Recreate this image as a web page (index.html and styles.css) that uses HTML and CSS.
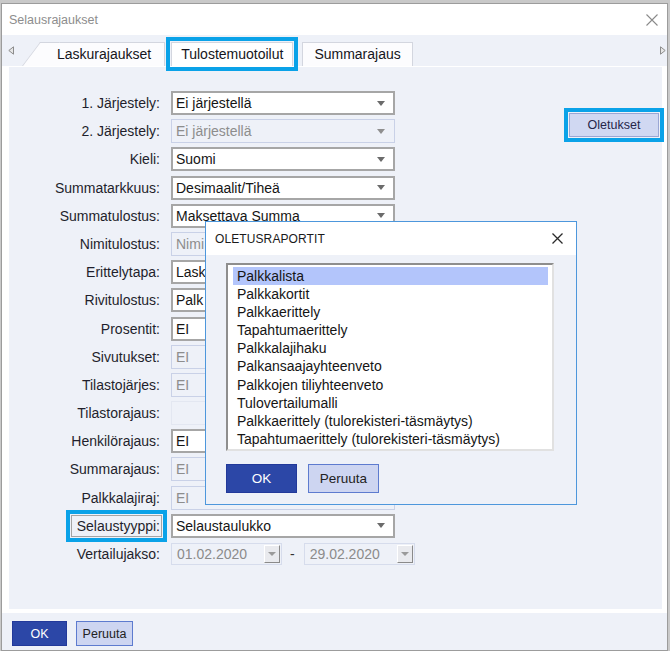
FILE: index.html
```html
<!DOCTYPE html>
<html lang="fi">

<head>
    <meta charset="UTF-8">
    <meta name="viewport" content="width=device-width, initial-scale=1.0">
    <title>Selausrajaukset</title>
    <link rel="stylesheet" href="styles.css">
</head>

<body>
    <div class="window">
        <div class="titlebar">
            <span class="title">Selausrajaukset</span>
            <svg class="close" width="12" height="12" viewBox="0 0 12 12">
                <path d="M0.5 0.5L11.5 11.5M11.5 0.5L0.5 11.5" stroke="#8a8a8a" stroke-width="1.1" fill="none" />
            </svg>
        </div>

        <div class="tabstrip">
            <svg class="tabnav" width="6" height="9" viewBox="0 0 6 9">
                <path d="M5.5 0.8V8.2L0.8 4.5z" fill="#e6e6e6" stroke="#8c8c8c" stroke-width="1" />
            </svg>
            <div class="tabs">
                <div class="tab tab-first"><span>Laskurajaukset</span></div>
                <div class="tab tab-active">Tulostemuotoilut</div>
                <div class="tab tab-last">Summarajaus</div>
            </div>
            <svg class="tabnav" width="6" height="9" viewBox="0 0 6 9">
                <path d="M0.5 0.8V8.2L5.2 4.5z" fill="#e6e6e6" stroke="#8c8c8c" stroke-width="1" />
            </svg>
        </div>

        <div class="panel">
            <div class="form">
                <button class="defaults-btn">Oletukset</button>

                <label class="lbl">1. Järjestely:</label>
                <div class="select">Ei järjestellä</div>

                <label class="lbl">2. Järjestely:</label>
                <div class="select disabled">Ei järjestellä</div>

                <label class="lbl">Kieli:</label>
                <div class="select">Suomi</div>

                <label class="lbl">Summatarkkuus:</label>
                <div class="select">Desimaalit/Tiheä</div>

                <label class="lbl">Summatulostus:</label>
                <div class="select">Maksettava Summa</div>

                <label class="lbl">Nimitulostus:</label>
                <div class="select disabled">Nimi</div>

                <label class="lbl">Erittelytapa:</label>
                <div class="select">Lask</div>

                <label class="lbl">Rivitulostus:</label>
                <div class="select">Palk</div>

                <label class="lbl">Prosentit:</label>
                <div class="select">EI</div>

                <label class="lbl">Sivutukset:</label>
                <div class="select disabled">EI</div>

                <label class="lbl">Tilastojärjes:</label>
                <div class="select disabled">EI</div>

                <label class="lbl">Tilastorajaus:</label>
                <div class="select disabled blank"></div>

                <label class="lbl">Henkilörajaus:</label>
                <div class="select">EI</div>

                <label class="lbl">Summarajaus:</label>
                <div class="select disabled">EI</div>

                <label class="lbl">Palkkalajiraj:</label>
                <div class="select disabled">EI</div>

                <label class="lbl lbl-focus">Selaustyyppi:</label>
                <div class="select">Selaustaulukko</div>

                <label class="lbl">Vertailujakso:</label>
                <div class="dates">
                    <div class="date">01.02.2020<span class="date-btn"></span></div>
                    <span class="dash">-</span>
                    <div class="date">29.02.2020<span class="date-btn"></span></div>
                </div>
            </div>

            <!-- oletusraportit popup -->
            <div class="modal">
                <div class="modal-head">
                    <span class="modal-title">OLETUSRAPORTIT</span>
                    <svg width="11" height="11" viewBox="0 0 11 11">
                        <path d="M0.5 0.5L10.5 10.5M10.5 0.5L0.5 10.5" stroke="#2a2a2a" stroke-width="1.3" fill="none" />
                    </svg>
                </div>
                <div class="modal-body">
                    <div class="listbox">
                        <div class="item selected">Palkkalista</div>
                        <div class="item">Palkkakortit</div>
                        <div class="item">Palkkaerittely</div>
                        <div class="item">Tapahtumaerittely</div>
                        <div class="item">Palkkalajihaku</div>
                        <div class="item">Palkansaajayhteenveto</div>
                        <div class="item">Palkkojen tiliyhteenveto</div>
                        <div class="item">Tulovertailumalli</div>
                        <div class="item">Palkkaerittely (tulorekisteri-täsmäytys)</div>
                        <div class="item">Tapahtumaerittely (tulorekisteri-täsmäytys)</div>
                    </div>
                    <div class="modal-buttons">
                        <button class="btn btn-ok">OK</button>
                        <button class="btn btn-cancel">Peruuta</button>
                    </div>
                </div>
            </div>
        </div>

        <div class="footer">
            <button class="btn btn-ok small">OK</button>
            <button class="btn btn-cancel small">Peruuta</button>
        </div>
    </div>
</body>

</html>
```

FILE: styles.css
```css
* {
    box-sizing: border-box;
}

body {
    margin: 0;
    background-color: #c9c9c9;
    font-family: "Liberation Sans", Arial, sans-serif;
    font-size: 14px;
    color: #1f1f2c;
}

.window {
    margin: 3px 0 0 1px;
    width: 667px;
    height: 648px;
    border: 1px solid #9c9c9c;
    background: #fff;
    display: flex;
    flex-direction: column;
}

.titlebar {
    flex: none;
    height: 31px;
    display: flex;
    align-items: center;
    justify-content: space-between;
    padding: 0 9px 0 7px;
}

.title {
    color: #8d8d8d;
    font-size: 12.5px;
}

/* tabs */
.tabstrip {
    flex: none;
    height: 31px;
    background: #eef1f8;
    display: flex;
    align-items: flex-end;
    padding: 0 1px 0 6px;
}

.tabnav {
    align-self: center;
}

.tabs {
    flex: 1;
    display: flex;
    align-items: flex-end;
    margin-left: 26px;
}

.tab {
    position: relative;
    height: 24px;
    line-height: 23px;
    background: #fcfcfe;
    border: 1px solid #d3d6df;
    border-bottom: none;
    color: #151520;
}

.tab-first {
    padding: 0 13px 0 17px;
    border-left: none;
}

.tab-first::before {
    content: "";
    position: absolute;
    left: -18px;
    top: -1px;
    bottom: 0;
    width: 19px;
    background: #fcfcfe;
    border-left: 1px solid #d3d6df;
    border-top: 1px solid #d3d6df;
    transform: skewX(-37deg);
    transform-origin: bottom left;
}

.tab-first span {
    position: relative;
}

.tab-active {
    z-index: 2;
    margin-left: 6px;
    padding: 0 9px;
    background: #fff;
    outline: 4px solid #0aa2e8;
    outline-offset: 1px;
}

.tab-last {
    margin-left: 9px;
    padding: 0 11px;
}

/* main panel */
.panel {
    position: relative;
    flex: 1;
    margin: 0 4px 0 6px;
    background: #eef1f8;
    border: 1px solid #fff;
}

.form {
    display: grid;
    grid-template-columns: 151px 224px 1fr;
    grid-auto-rows: 24px;
    column-gap: 11px;
    row-gap: 4.2px;
    padding-top: 24px;
}

.lbl {
    grid-column: 1;
    align-self: center;
    justify-self: end;
    white-space: nowrap;
}

.lbl-focus {
    height: 22px;
    line-height: 20px;
    margin-right: -2px;
    padding: 0 1px 0 5px;
    border: 1px solid #a4a4a4;
    outline: 4px solid #0aa2e8;
    outline-offset: 1px;
}

.select {
    grid-column: 2;
    display: flex;
    align-items: center;
    justify-content: space-between;
    padding: 0 8px 0 3px;
    background: #fff;
    border: 2px solid #a6a6a6;
    color: #151515;
    white-space: nowrap;
}

.select::after {
    content: "";
    border-left: 4.5px solid transparent;
    border-right: 4.5px solid transparent;
    border-top: 5px solid #6b6b6b;
}

.select.disabled {
    background: #eef1f8;
    border: 1px solid #c9d1e7;
    padding: 0 9px 0 4px;
    color: #8d8d8d;
}

.select.disabled::after {
    border-top-color: #8f8f8f;
}

.select.blank {
    border-color: #e3e7f1;
}

.select.blank::after {
    display: none;
}

.dates {
    grid-column: 2 / span 2;
    display: flex;
    align-items: center;
}

.date {
    width: 111px;
    height: 22px;
    display: flex;
    align-items: center;
    justify-content: space-between;
    padding: 0 1px 0 5px;
    background: #eef1f8;
    border: 1px solid #d6dcec;
    color: #8b8b8b;
}

.date-btn {
    width: 16px;
    height: 18px;
    display: flex;
    align-items: center;
    justify-content: center;
    background: #e9eaee;
    border: 1px solid;
    border-color: #fff #8a8a8a #8a8a8a #fff;
}

.date-btn::after {
    content: "";
    border-left: 4px solid transparent;
    border-right: 4px solid transparent;
    border-top: 4px solid #9a9a9a;
}

.dash {
    margin: 0 9px 0 8px;
    color: #333;
}

.defaults-btn {
    grid-column: 3;
    grid-row: 1 / span 2;
    justify-self: end;
    align-self: end;
    width: 90px;
    height: 24px;
    margin: 0 3px 6px 0;
    background: #d0d8f2;
    border: 1px solid #9aa6d4;
    font-family: inherit;
    font-size: 12.5px;
    color: #26264a;
    outline: 4px solid #0aa2e8;
    outline-offset: 1px;
}

/* popup */
.modal {
    position: absolute;
    left: 196px;
    top: 154px;
    z-index: 5;
    width: 372px;
    height: 284px;
    background: #eef1f8;
    border: 1px solid #4d97dc;
}

.modal-head {
    height: 33px;
    display: flex;
    align-items: center;
    justify-content: space-between;
    padding: 0 13px 0 9px;
    background: #fff;
}

.modal-title {
    font-size: 12px;
    color: #1a1a1a;
    letter-spacing: 0.1px;
}

.modal-body {
    padding: 8px 22px 0 20px;
}

.listbox {
    height: 188px;
    padding: 2px 4px 0 5px;
    background: #fff;
    border: 2px solid;
    border-color: #8e8e8e #e1e1e1 #e1e1e1 #8e8e8e;
    overflow: hidden;
}

.item {
    height: 18.1px;
    line-height: 18px;
    padding-left: 4px;
    color: #151515;
    white-space: nowrap;
}

.item.selected {
    background: #b3c5fb;
}

.modal-buttons {
    display: flex;
    gap: 11px;
    margin-top: 13px;
}

.btn {
    width: 71px;
    height: 29px;
    font-family: inherit;
    font-size: 13.5px;
    padding: 0;
}

.btn-ok {
    background: #2c47a7;
    border: 1px solid #22399a;
    color: #fff;
}

.btn-cancel {
    background: #cdd5f1;
    border: 1px solid #5d7bcf;
    color: #222;
}

.footer {
    flex: none;
    height: 40px;
    display: flex;
    gap: 9px;
    padding: 8px 0 0 10px;
    background: #eef1f8;
    border-top: 3px solid #fff;
}

.btn.small {
    width: 55px;
    height: 25px;
    font-size: 12.5px;
}

.btn-cancel.small {
    width: 57px;
}
```
